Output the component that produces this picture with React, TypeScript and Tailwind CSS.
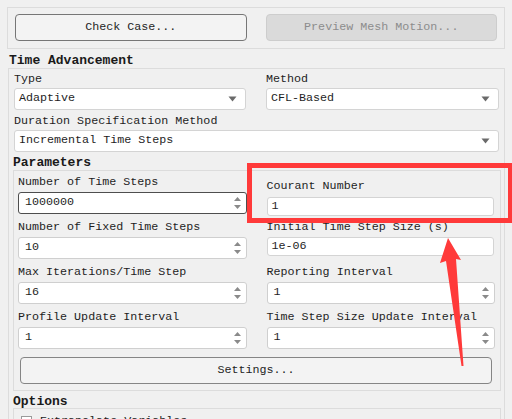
import React from 'react';

const SpinArrows = () => (
  <svg className="w-[9px] h-[14px] shrink-0" viewBox="0 0 9 14">
    <polygon points="4.5,1 8,5 1,5" fill="#8a8a8a" />
    <polygon points="1,9 8,9 4.5,13" fill="#8a8a8a" />
  </svg>
);

const DropArrow = () => (
  <svg className="w-[9px] h-[6px] shrink-0" viewBox="0 0 9 6">
    <polygon points="0.5,0.5 8.5,0.5 4.5,5.5" fill="#6a6a6a" />
  </svg>
);

const Label = ({ text, className = '' }: { text: string; className?: string }) => (
  <div className={`h-[14px] leading-[14px] whitespace-nowrap text-[#1e1e1e] ${className}`}>{text}</div>
);

const Select = ({ value, className = '' }: { value: string; className?: string }) => (
  <div
    className={`h-[22px] flex items-center justify-between bg-white border border-[#d4d4d4] rounded-[3px] pl-[4px] pr-[8px] ${className}`}
  >
    <span className="text-[#1e1e1e]">{value}</span>
    <DropArrow />
  </div>
);

const Spin = ({ value, focused = false, className = '' }: { value: string; focused?: boolean; className?: string }) => (
  <div
    className={`h-[22px] flex items-center justify-between bg-white rounded-[3px] pl-[6px] pr-[4px] ${
      focused ? 'border-[1.5px] border-[#4e4e4e]' : 'border border-[#cfcfcf]'
    } ${className}`}
  >
    <span className="text-[#1e1e1e]">{value}</span>
    <SpinArrows />
  </div>
);

const TextInput = ({ value, className = '' }: { value: string; className?: string }) => (
  <div className={`h-[19px] flex items-center bg-white border border-[#d4d4d4] rounded-[3px] pl-[4px] ${className}`}>
    <span className="text-[#1e1e1e]">{value}</span>
  </div>
);

export default function App() {
  return (
    <div
      className="relative w-[512px] h-[419px] overflow-hidden bg-[#f0f0f0] text-[11.7px]"
      style={{ fontFamily: '"Liberation Mono", "DejaVu Sans Mono", monospace' }}
    >
      {/* top buttons */}
      <div className="mt-[7px] mx-[7px] h-[42px] border border-[#dcdcdc] flex gap-[19px] pl-[7px] pr-[7px] pt-[6px]">
        <button className="w-[232px] h-[27px] border border-[#767676] rounded-[4px] bg-[#f3f3f3] text-[#1e1e1e]">
          Check Case...
        </button>
        <button className="w-[232px] h-[27px] border border-[#cdcdcd] rounded-[4px] bg-[#dadada] text-[#8c8c8c]">
          Preview Mesh Motion...
        </button>
      </div>

      <div className="mt-[5px] ml-[9px] h-[14px] leading-[14px] text-[13px] font-bold text-[#1a1a1a]">
        Time Advancement
      </div>

      <div className="ml-[8px] mr-[7px] border border-[#dcdcdc] pt-[3px] h-[400px]">
        <div className="grid grid-cols-2 gap-x-[20px] pl-[5px] pr-[6px]">
          <div>
            <Label text="Type" />
            <Select value="Adaptive" className="mt-[2px]" />
          </div>
          <div>
            <Label text="Method" />
            <Select value="CFL-Based" className="mt-[2px] mr-[-1px]" />
          </div>
        </div>
        <div className="pl-[5px] pr-[5px] mt-[4px]">
          <Label text="Duration Specification Method" />
          <Select value="Incremental Time Steps" className="mt-[2px]" />
        </div>

        <div className="mt-[4px] ml-[4px] h-[14px] leading-[14px] text-[13px] font-bold text-[#1a1a1a]">
          Parameters
        </div>
        <div className="ml-[4px] mr-[3px] border border-[#dcdcdc] pl-[4px] pr-[5px] pb-[6px]">
          <div className="grid grid-cols-2 gap-x-[20px]">
            <div className="flex flex-col pt-[4px]">
              <Label text="Number of Time Steps" />
              <Spin value="1000000" focused className="mt-[3px]" />
              <Label text="Number of Fixed Time Steps" className="mt-[6px]" />
              <Spin value="10" className="mt-[3px]" />
              <Label text="Max Iterations/Time Step" className="mt-[6px]" />
              <Spin value="16" className="mt-[3px]" />
              <Label text="Profile Update Interval" className="mt-[6px]" />
              <Spin value="1" className="mt-[3px]" />
            </div>
            <div className="flex flex-col pt-[8px]">
              <Label text="Courant Number" />
              <TextInput value="1" className="mt-[4px] mr-[1px]" />
              <Label text="Initial Time Step Size (s)" className="mt-[4px]" />
              <TextInput value="1e-06" className="mt-[3px] mr-[1px]" />
              <Label text="Reporting Interval" className="mt-[9px]" />
              <Spin value="1" className="mt-[3px]" />
              <Label text="Time Step Size Update Interval" className="mt-[6px]" />
              <Spin value="1" className="mt-[3px]" />
            </div>
          </div>
          <button className="mt-[8px] ml-[2px] w-[472px] h-[27px] border border-[#858585] rounded-[4px] bg-[#f3f3f3] text-[#1e1e1e]">
            Settings...
          </button>
        </div>

        <div className="mt-[5px] ml-[4px] h-[12px] leading-[12px] text-[13px] font-bold text-[#1a1a1a]">
          Options
        </div>
        <div className="ml-[4px] mr-[3px] border border-[#dcdcdc] pl-[7px] pt-[4px] h-[40px]">
          <div className="flex items-center gap-[8px]">
            <div className="w-[11px] h-[11px] bg-white border border-[#9a9a9a]" />
            <span className="text-[#1e1e1e]">Extrapolate Variables</span>
          </div>
        </div>
      </div>

      {/* annotation overlay */}
      <div className="absolute left-[247px] top-[163px] w-[266px] h-[60px] border-[5px] border-[#ff3a3a]" />
      <svg className="absolute left-[430px] top-[230px] w-[40px] h-[145px]" viewBox="0 0 40 145">
        <polygon
          points="18,8 10,33 16,31 31.5,136 33.5,136 26,29 31,30"
          fill="#ff3a3a"
        />
      </svg>
    </div>
  );
}
